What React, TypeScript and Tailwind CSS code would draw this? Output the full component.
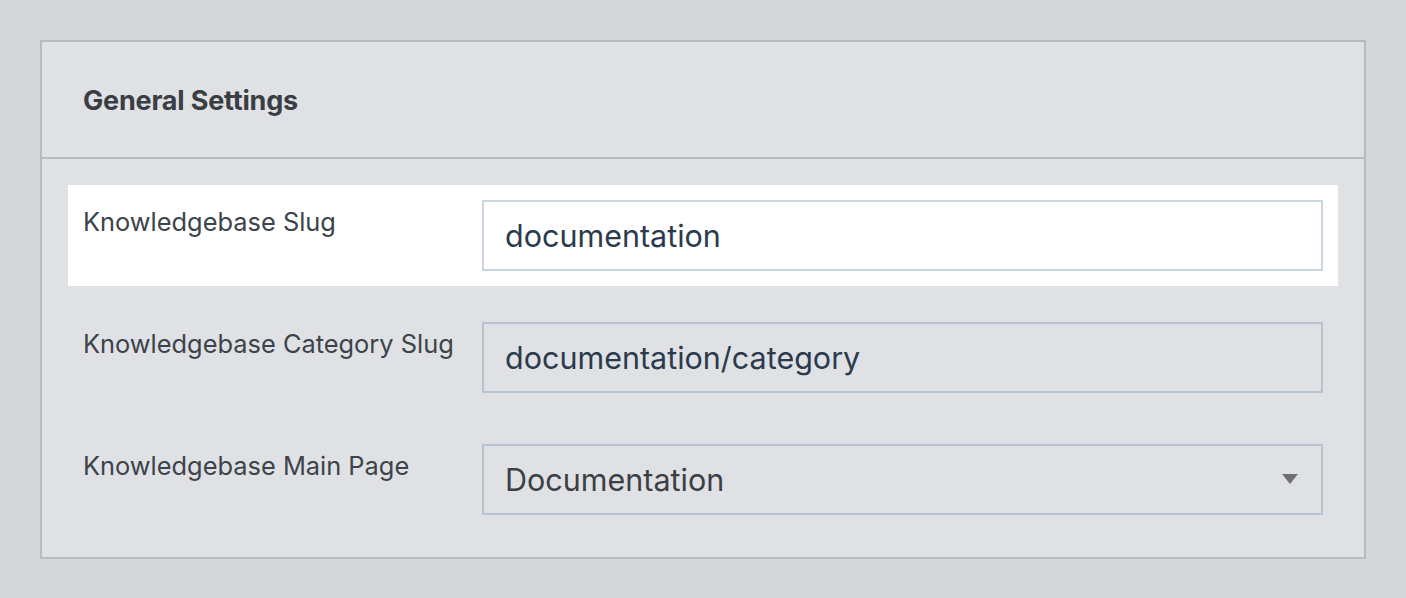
export default function App() {
  const rows = [
    { label: "Knowledgebase Slug", value: "documentation", active: true },
    { label: "Knowledgebase Category Slug", value: "documentation/category", active: false },
  ];

  return (
    <div className="min-h-[598px] w-full bg-[#d5d6da] pt-10 px-10 font-['Inter',sans-serif]">
      <div className="border-2 border-[#b7bbc0] bg-[#e0e1e5]">
        <div className="flex h-[117px] items-center border-b-2 border-[#b7bbc0] px-[41px] pt-[3px]">
          <h2 className="text-[27px] font-bold tracking-[-0.2px] text-[#3a3e43]">General Settings</h2>
        </div>

        <div className="flex flex-col gap-[21px] px-[26px] pt-[26px] pb-[27px]">
          {rows.map((row) => (
            <div
              key={row.label}
              className={`flex h-[101px] items-start px-[15px] pt-[15px] ${row.active ? "bg-white" : ""}`}
            >
              <label className="w-[399px] shrink-0 pt-[7px] text-[25.4px] leading-[30px] text-[#3c434a]">
                {row.label}
              </label>
              <input
                readOnly
                value={row.value}
                className={`h-[71px] w-[843px] border-2 bg-transparent px-[21px] text-[30.5px] text-[#2b3a4c] outline-none ${row.active ? "border-[#c9d5e0]" : "border-[#b6c3d0]"}`}
              />
            </div>
          ))}

          <div className="flex h-[101px] items-start px-[15px] pt-[15px]">
            <label className="w-[399px] shrink-0 pt-[7px] text-[25.4px] leading-[30px] text-[#3c434a]">
              Knowledgebase Main Page
            </label>
            <div className="flex h-[71px] w-[843px] items-center justify-between border-2 border-[#b6c3d0] pl-[21px] pr-[23px]">
              <span className="text-[30.5px] text-[#3c3f43]">Documentation</span>
              <svg width="16" height="11" viewBox="0 0 16 11">
                <polygon points="0,0 16,0 8,10" fill="#6e7074" />
              </svg>
            </div>
          </div>
        </div>
      </div>
    </div>
  );
}
